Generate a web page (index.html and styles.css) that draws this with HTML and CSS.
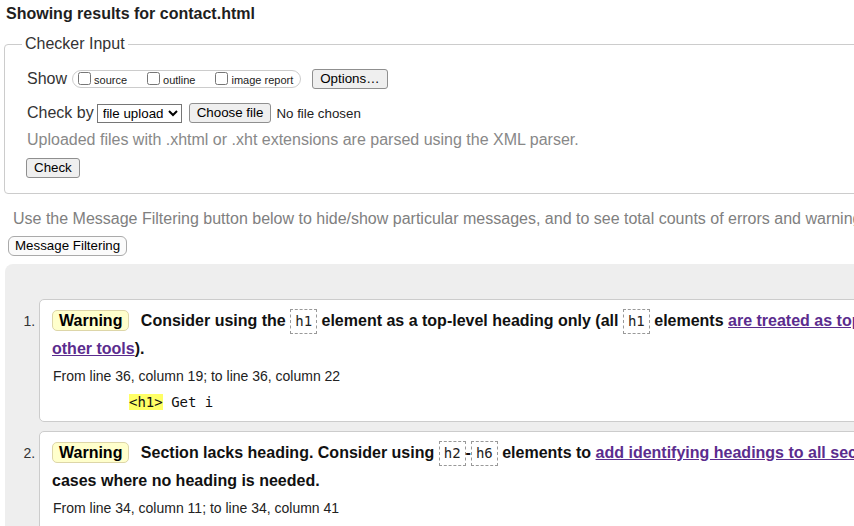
FILE: index.html
```html
<!DOCTYPE html>
<html lang="en">
<head>
<meta charset="utf-8">
<title>Showing results for contact.html</title>
<link rel="stylesheet" href="styles.css">
</head>
<body>
<div class="page">
  <h2 class="title">Showing results for contact.html</h2>

  <fieldset class="checker">
    <legend class="legend">Checker Input</legend>
    <div class="row row-show">
      <span class="label">Show</span>
      <span class="showopts">
        <label class="opt"><input type="checkbox">source</label>
        <label class="opt"><input type="checkbox">outline</label>
        <label class="opt opt-last"><input type="checkbox">image report</label>
      </span>
      <button class="btn btn-options" type="button">Options…</button>
    </div>
    <div class="row row-check">
      <span class="label">Check by</span>
      <select class="sel"><option>file upload</option></select>
      <button class="btn btn-file" type="button">Choose file</button>
      <span class="nofile">No file chosen</span>
    </div>
    <p class="hint">Uploaded files with .xhtml or .xht extensions are parsed using the XML parser.</p>
    <div class="row-submit"><button class="btn" type="button">Check</button></div>
  </fieldset>

  <p class="filter-note">Use the Message Filtering button below to hide/show particular messages, and to see total counts of errors and warnings.</p>
  <button class="btn btn-filter" type="button">Message Filtering</button>

  <div class="results">
    <ol class="messages">
      <li class="msg">
        <p class="msg-text"><span class="badge">Warning</span> <span>Consider using the <code class="c">h1</code> element as a top-level heading only (all <code class="c">h1</code> elements <a href="#" class="lnk">are treated as top-level headings by many screen readers and<br>other tools</a>).</span></p>
        <p class="loc">From line 36, column 19; to line 36, column 22</p>
        <p class="extract"><code class="ex"><b class="hl">&lt;h1&gt;</b> Get i</code></p>
      </li>
      <li class="msg">
        <p class="msg-text"><span class="badge">Warning</span> <span>Section lacks heading. Consider using <code class="c">h2</code>-<code class="c">h6</code> elements to <a href="#" class="lnk">add identifying headings to all sections</a>, or else use a <code class="c">div</code> element instead for any<br>cases where no heading is needed.</span></p>
        <p class="loc">From line 34, column 11; to line 34, column 41</p>
        <p class="extract"><code class="ex">&lt;section class="contact"&gt;</code></p>
      </li>
    </ol>
  </div>
</div>
</body>
</html>
```

FILE: styles.css
```css
html {
  overflow: hidden;
  background: #fff;
}
body {
  margin: 0;
  font-family: "Liberation Sans", Arial, sans-serif;
  color: #222;
}
.page {
  width: 1500px;
  padding: 0 0 40px 0;
}
.title {
  margin: 4px 0 0 6px;
  font-size: 16px;
  line-height: 20px;
  font-weight: bold;
  color: #1e1e1e;
}
.checker {
  margin: 11px 0 0 4px;
  width: 1300px;
  border: 1px solid #ccc;
  border-radius: 4px;
  padding: 0 20px 15px 22px;
  box-sizing: border-box;
}
.legend {
  margin-left: -5px;
  padding: 0 3px;
  font-size: 16px;
  line-height: 18px;
  color: #333;
}
.row {
  display: flex;
  align-items: center;
  height: 20px;
}
.row-show {
  margin-top: 16px;
}
.row-check {
  margin-top: 14px;
}
.label {
  font-size: 16px;
  color: #333;
}
.row-show .label {
  margin-right: 5px;
}
.row-check .label {
  margin-right: 3px;
}
.showopts {
  display: inline-flex;
  align-items: center;
  height: 16px;
  border: 1px solid #ccc;
  border-radius: 9px;
  padding: 0 1px;
  margin-right: 11px;
}
.opt {
  display: inline-flex;
  align-items: flex-end;
  font-size: 11px;
  line-height: 13px;
  color: #222;
  margin-right: 16px;
}
.opt input {
  width: 13px;
  height: 13px;
  margin: 0 3px 2px 4px;
}
.opt-last {
  margin-right: 6px;
}
.btn {
  font-family: "Liberation Sans", Arial, sans-serif;
  font-size: 13.33px;
  line-height: 16px;
  height: 20px;
  padding: 0 7px;
  border: 1px solid #8f8f8f;
  border-radius: 3px;
  background: #efefef;
  color: #000;
  box-sizing: border-box;
}
.sel {
  font-family: "Liberation Sans", Arial, sans-serif;
  font-size: 13.33px;
  height: 19px;
  width: 85px;
  border: 1px solid #767676;
  border-radius: 0;
  padding: 0 1px;
  background: #fff;
  color: #000;
  margin-right: 7px;
}
.nofile {
  font-size: 13.33px;
  color: #222;
  margin-left: 5px;
}
.hint {
  margin: 7px 0 0 0;
  font-size: 16px;
  line-height: 20px;
  color: #888;
}
.row-submit {
  margin: 8px 0 0 -1px;
}
.filter-note {
  margin: 15px 0 0 13px;
  font-size: 16px;
  line-height: 20px;
  color: #808080;
}
.btn-filter {
  margin: 7px 0 0 8px;
  height: 20px;
  padding: 0 6px;
  border: 1px solid #aaa;
  border-radius: 6px;
  background: #fbfbfb;
  display: block;
}
.results {
  margin: 8px 0 0 5px;
  background: #eee;
  border-radius: 8px 0 0 0;
  padding: 35px 0 20px 0;
}
.messages {
  margin: 0;
  padding: 0 0 0 34px;
}
.msg {
  background: #fff;
  border: 1px solid #ccc;
  border-radius: 5px 0 0 5px;
  padding: 7px 12px 10px 12px;
  margin-bottom: 9px;
  height: 123px;
  box-sizing: border-box;
  color: #333;
}
.msg::marker {
  font-size: 14px;
  color: #333;
}
.msg-text {
  margin: 0;
  font-size: 16px;
  line-height: 28px;
  font-weight: bold;
  color: #111;
  white-space: nowrap;
}
.badge {
  display: inline-block;
  font-weight: bold;
  font-size: 16px;
  line-height: 19px;
  padding: 0 6px;
  background: #ffffcc;
  border: 1px solid #ddd6a8;
  border-radius: 5px;
  color: #000;
  margin-right: 7px;
}
.c {
  display: inline-block;
  font-family: "DejaVu Sans Mono", monospace;
  font-weight: normal;
  font-size: 14px;
  line-height: 17px;
  padding: 3px 4px;
  border: 1px dashed #999;
  color: #222;
}
.lnk {
  color: #5b2c8e;
  text-decoration: underline;
}
.loc {
  margin: 4px 0 0 1px;
  font-size: 14px;
  line-height: 18px;
  color: #222;
}
.extract {
  margin: 8px 0 0 77px;
  font-size: 14px;
  line-height: 18px;
}
.ex {
  font-family: "DejaVu Sans Mono", monospace;
  font-size: 14px;
  color: #111;
}
.hl {
  font-weight: normal;
  background: #ffff66;
}
```
